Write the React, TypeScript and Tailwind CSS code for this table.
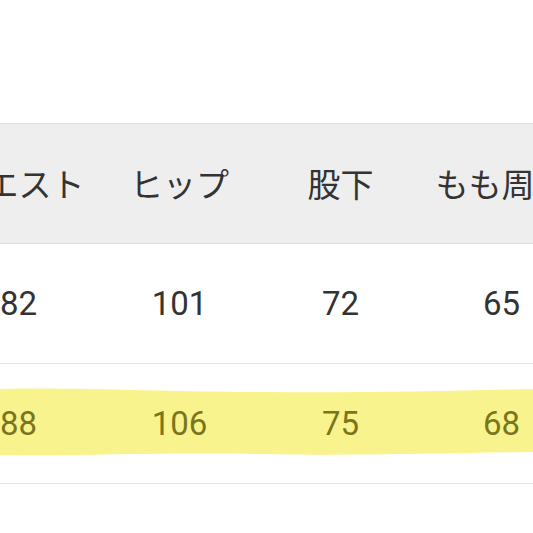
const headers = ["ウエスト", "ヒップ", "股下", "もも周り"]
const rows = [
  { values: ["82", "101", "72", "65"], marked: false },
  { values: ["88", "106", "75", "68"], marked: true },
]

function Marker() {
  // hand-drawn highlighter stroke over the second row
  return (
    <svg
      className="absolute left-0 top-[22px] w-full h-[72px]"
      viewBox="0 0 533 72"
      preserveAspectRatio="none"
    >
      <path
        d="M0 3 C80 1 160 6 260 6 C360 7 450 5 533 3 L533 66 C440 67 360 70 260 68 C170 66 80 70 0 69 Z"
        fill="#f8f38c"
      />
    </svg>
  )
}

export default function App() {
  return (
    <div
      className="w-[533px] h-[533px] bg-white overflow-hidden"
      style={{ fontFamily: "Roboto, 'Noto Sans CJK JP', sans-serif" }}
    >
      <div className="h-[123px]" />

      <div className="flex h-[121px] items-center bg-[#eeeeee] border-y border-[#dedede] ml-[-62px]">
        {headers.map((h) => (
          <div
            key={h}
            className="w-[161px] shrink-0 text-center text-[33px] text-[#333333] whitespace-nowrap"
            style={{ fontFamily: "'Noto Sans CJK JP', sans-serif" }}
          >
            {h}
          </div>
        ))}
      </div>

      {rows.map((row, i) => (
        <div
          key={i}
          className="relative h-[120px] border-b border-[#e2e2e2]"
        >
          {row.marked && <Marker />}
          <div className="relative flex h-full items-center ml-[-62px]">
            {row.values.map((v, j) => (
              <div
                key={j}
                className={`w-[161px] shrink-0 text-center text-[33px] ${
                  row.marked ? "text-[#7a761e]" : "text-[#333333]"
                }`}
              >
                {v}
              </div>
            ))}
          </div>
        </div>
      ))}
    </div>
  )
}
